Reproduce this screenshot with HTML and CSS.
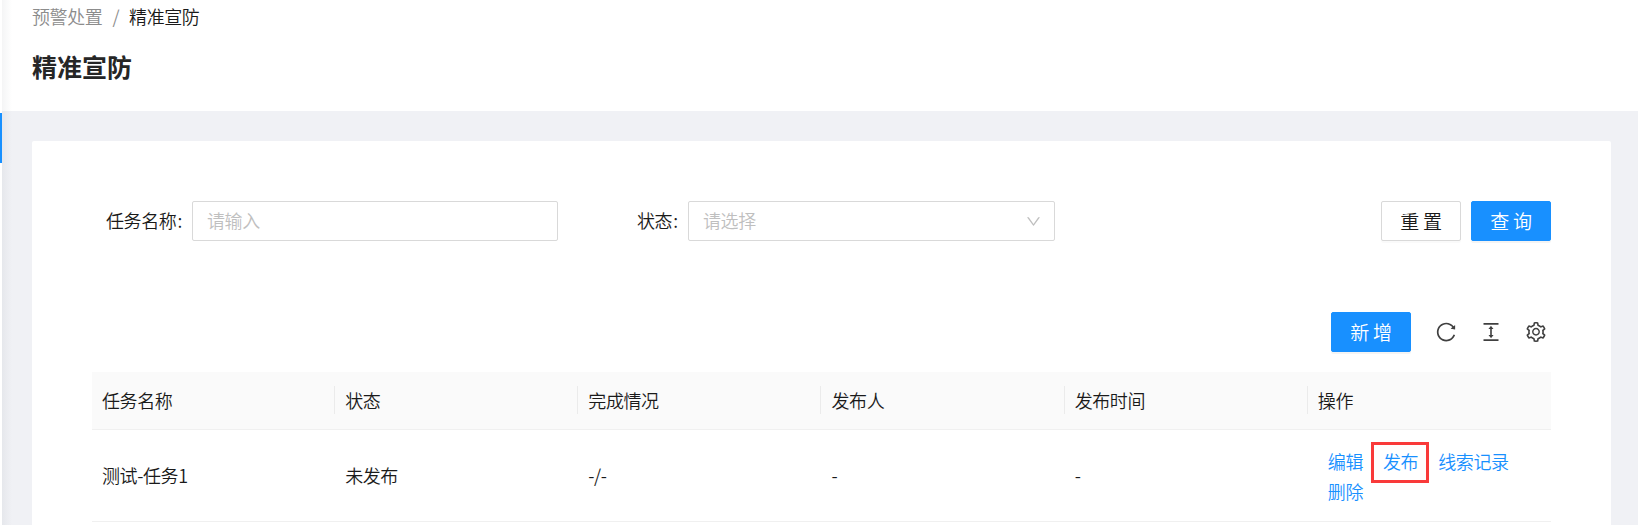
FILE: index.html
```
<!DOCTYPE html>
<html lang="zh-CN">
<head>
<meta charset="utf-8">
<title>精准宣防</title>
<link rel="stylesheet" href="styles.css">
</head>
<body>
<div class="layout">
  <aside class="sider"><div class="sider-active"></div></aside>
  <main class="main">
    <header class="page-header">
      <nav class="breadcrumb"><a class="crumb">预警处置</a><span class="sep">/</span><span>精准宣防</span></nav>
      <h1 class="title">精准宣防</h1>
    </header>
    <section class="card">
      <form class="search">
        <div class="field field-name">
          <label class="label">任务名称<span class="colon">:</span></label>
          <div class="control">请输入</div>
        </div>
        <div class="field field-status">
          <label class="label">状态<span class="colon">:</span></label>
          <div class="control select"><span>请选择</span>
            <svg class="arrow" viewBox="64 64 896 896"><path d="M884 256h-75c-5.1 0-9.9 2.5-12.9 6.6L512 654.2 227.9 262.6c-3-4.1-7.8-6.6-12.9-6.6h-75c-6.5 0-10.3 7.4-6.5 12.7l352.6 486.1c12.8 17.6 39 17.6 51.7 0l352.6-486.1c3.9-5.3.1-12.7-6.4-12.7z"/></svg>
          </div>
        </div>
        <div class="buttons">
          <button type="button" class="btn">重置</button>
          <button type="button" class="btn primary">查询</button>
        </div>
      </form>
      <div class="toolbar">
        <button type="button" class="btn primary">新增</button>
        <div class="icons">
          <svg class="icon" viewBox="64 64 896 896"><path d="M909.1 209.3l-56.4 44.1C775.8 155.1 656.2 92 521.9 92 290 92 102.3 279.5 102 511.5 101.7 743.7 289.8 932 521.9 932c181.3 0 335.8-115 394.6-276.1 1.5-4.2-.7-8.9-4.9-10.3l-56.7-19.5a8 8 0 00-10.1 4.8c-1.8 5-3.8 10-5.9 14.9-17.3 41-42.1 77.8-73.7 109.4A344.77 344.77 0 01655.9 829c-42.3 17.9-87.4 27-133.8 27-46.5 0-91.5-9.1-133.8-27A341.5 341.5 0 01279 755.2a342.16 342.16 0 01-73.7-109.4c-17.9-42.4-27-87.4-27-133.9s9.1-91.5 27-133.9c17.3-41 42.1-77.8 73.7-109.4 31.6-31.6 68.4-56.4 109.3-73.8 42.3-17.9 87.4-27 133.8-27 46.5 0 91.5 9.1 133.8 27a341.5 341.5 0 01109.3 73.8c9.9 9.9 19.2 20.4 27.8 31.4l-60.2 47a8 8 0 003 14.1l175.6 43c5 1.2 9.9-2.6 9.9-7.7l.8-180.9c-.1-6.6-7.8-10.3-13-6.2z"/></svg>
          <svg class="icon" viewBox="64 64 896 896"><path d="M176 836h672v76H176zM176 112h672v76H176zM610.8 378c6 0 9.4-7 5.7-11.7L515.7 238.7a7.14 7.14 0 00-11.3 0L403.6 366.3a7.23 7.23 0 005.7 11.7H476v268h-62.8c-6 0-9.4 7-5.7 11.7l100.8 127.5c2.9 3.7 8.5 3.7 11.3 0l100.8-127.5c3.7-4.7.4-11.7-5.7-11.7H548V378h62.8z"/></svg>
          <svg class="icon" viewBox="64 64 896 896"><path d="M924.8 625.7l-65.5-56c3.1-19 4.7-38.4 4.7-57.8s-1.6-38.8-4.7-57.8l65.5-56a32.03 32.03 0 009.3-35.2l-.9-2.6a443.74 443.74 0 00-79.7-137.9l-1.8-2.1a32.12 32.12 0 00-35.1-9.5l-81.3 28.9c-30-24.6-63.5-44-99.7-57.6l-15.7-85a32.05 32.05 0 00-25.8-25.7l-2.7-.5c-52.1-9.4-106.9-9.4-159 0l-2.7.5a32.05 32.05 0 00-25.8 25.7l-15.8 85.4a351.86 351.86 0 00-99 57.4l-81.9-29.1a32 32 0 00-35.1 9.5l-1.8 2.1a446.02 446.02 0 00-79.7 137.9l-.9 2.6c-4.5 12.5-.8 26.5 9.3 35.2l66.3 56.6c-3.1 18.8-4.6 38-4.6 57.1 0 19.2 1.5 38.4 4.6 57.1L99 625.5a32.03 32.03 0 00-9.3 35.2l.9 2.6c18.1 50.4 44.9 96.9 79.7 137.9l1.8 2.1a32.12 32.12 0 0035.1 9.5l81.9-29.1c29.8 24.5 63.1 43.9 99 57.4l15.8 85.4a32.05 32.05 0 0025.8 25.7l2.7.5a449.4 449.4 0 00159 0l2.7-.5a32.05 32.05 0 0025.8-25.7l15.7-85a350 350 0 0099.7-57.6l81.3 28.9a32 32 0 0035.1-9.5l1.8-2.1c34.8-41.1 61.6-87.5 79.7-137.9l.9-2.6c4.5-12.3.8-26.3-9.3-35zM788.3 465.9c2.5 15.1 3.8 30.6 3.8 46.1s-1.3 31-3.8 46.1l-6.6 40.1 74.7 63.9a370.03 370.03 0 01-42.6 73.6L721 702.8l-31.4 25.8c-23.9 19.6-50.5 35-79.3 45.8l-38.1 14.3-17.9 97a377.5 377.5 0 01-85 0l-17.9-97.2-37.8-14.5c-28.5-10.8-55-26.2-78.7-45.7l-31.4-25.9-93.4 33.2c-17-22.9-31.2-47.6-42.6-73.6l75.5-64.5-6.5-40c-2.4-14.9-3.7-30.3-3.7-45.5 0-15.3 1.2-30.6 3.7-45.5l6.5-40-75.5-64.5c11.3-26.1 25.6-50.7 42.6-73.6l93.4 33.2 31.4-25.9c23.7-19.5 50.2-34.9 78.7-45.7l37.9-14.3 17.9-97.2c28.1-3.2 56.8-3.2 85 0l17.9 97 38.1 14.3c28.7 10.8 55.4 26.2 79.3 45.8l31.4 25.8 92.8-32.9c17 22.9 31.2 47.6 42.6 73.6L781.8 426l6.5 39.9zM512 326c-97.2 0-176 78.8-176 176s78.8 176 176 176 176-78.8 176-176-78.8-176-176-176zm79.2 255.2A111.6 111.6 0 01512 614c-29.9 0-58-11.7-79.2-32.8A111.6 111.6 0 01400 502c0-29.9 11.7-58 32.8-79.2C454 401.6 482.1 390 512 390c29.9 0 58 11.6 79.2 32.8A111.6 111.6 0 01624 502c0 29.9-11.7 58-32.8 79.2z"/></svg>
        </div>
      </div>
      <table class="table">
        <thead>
          <tr><th>任务名称</th><th>状态</th><th>完成情况</th><th>发布人</th><th>发布时间</th><th>操作</th></tr>
        </thead>
        <tbody>
          <tr>
            <td>测试-任务1</td><td>未发布</td><td>-/-</td><td>-</td><td>-</td>
            <td><div class="actions"><a>编辑</a><a class="marked">发布</a><a>线索记录</a><a>删除</a></div></td>
          </tr>
        </tbody>
      </table>
    </section>
  </main>
</div>
</body>
</html>
```
FILE: styles.css
```
*, *::before, *::after { box-sizing: border-box; }
body {
  margin: 0;
  height: 525px;
  overflow: hidden;
  background: #f0f2f5;
  color: #1a1a1a;
  font: 350 18px/27.5px "Noto Sans CJK SC", sans-serif;
  letter-spacing: -.4px;
}
.layout { display: flex; height: 525px; }
.sider { flex: none; width: 2px; padding-top: 113px; background: #fff; }
.sider-active { height: 50px; background: #1890ff; }
.main {
  flex: 1;
  min-width: 0;
  background: #f0f1f5;
  position: relative;
}
.main::before {
  content: "";
  position: absolute;
  inset: 0 auto 0 0;
  width: 10px;
  background: linear-gradient(90deg, rgba(0, 21, 41, .045), rgba(0, 21, 41, 0));
}
.page-header { height: 111px; padding: 3px 30px 0; background: #fff; }
.breadcrumb { display: flex; }
.crumb { color: #8c8c8c; }
.sep { margin: 0 10px; color: #8c8c8c; }
.title { margin: 15px 0 0; font-size: 25px; line-height: 40px; font-weight: 700; letter-spacing: 0; color: #262626; }
.card {
  height: 400px;
  margin: 30px 27px 0 30px;
  padding: 60px 60px 0;
  border-radius: 2px;
  background: #fff;
}
.search { display: flex; height: 40px; align-items: center; }
.field { display: flex; align-items: center; }
.field-name { margin-left: 14px; }
.field-status { margin-left: 79px; }
.label { display: flex; width: 86px; white-space: nowrap; }
.field-status .label { width: 51px; }
.colon { margin-left: 1px; }
.control {
  display: flex;
  align-items: center;
  width: 366px;
  height: 40px;
  padding: 0 13px 0 14px;
  border: 1px solid #d9d9d9;
  border-radius: 2px;
  color: #bfbfbf;
}
.select { width: 367px; justify-content: space-between; }
.arrow { width: 15px; height: 15px; fill: #bfbfbf; }
.buttons { display: flex; gap: 10px; margin-left: auto; }
.btn {
  width: 80px;
  height: 40px;
  padding: 0 0 1px 4px;
  border: 1px solid #d9d9d9;
  border-radius: 2px;
  background: #fff;
  box-shadow: 0 2px 0 rgba(0, 0, 0, .02);
  color: #1a1a1a;
  font: inherit;
  font-size: 19px;
  letter-spacing: 3.8px;
}
.primary { border-color: #1890ff; background: #1890ff; color: #fff; box-shadow: 0 2px 0 rgba(0, 0, 0, .045); }
.toolbar { display: flex; justify-content: flex-end; align-items: center; height: 40px; margin-top: 71px; }
.icons { display: flex; gap: 25px; margin: 0 5px 0 25px; }
.icon { display: block; width: 20px; height: 20px; fill: #404040; }
.table {
  width: 1459px;
  margin-top: 20px;
  border-collapse: separate;
  border-spacing: 0;
  table-layout: fixed;
}
.table th, .table td { padding: 0 10px; text-align: left; border-bottom: 1px solid #f0f0f0; }
.table th {
  height: 58px;
  background: #fafafa;
  font-weight: inherit;
}
.table th:not(:last-child) {
  background: linear-gradient(#ebebeb, #ebebeb) right 14px / 1px 28px no-repeat #fafafa;
}
.table td { height: 92px; }
.actions { display: flex; flex-wrap: wrap; column-gap: 20px; padding-left: 10px; line-height: 30px; color: #1890ff; }
.marked { position: relative; }
.marked::after {
  content: "";
  position: absolute;
  left: -12px;
  top: -4px;
  width: 58px;
  height: 41px;
  border: 3px solid #f93a3a;
}
```
